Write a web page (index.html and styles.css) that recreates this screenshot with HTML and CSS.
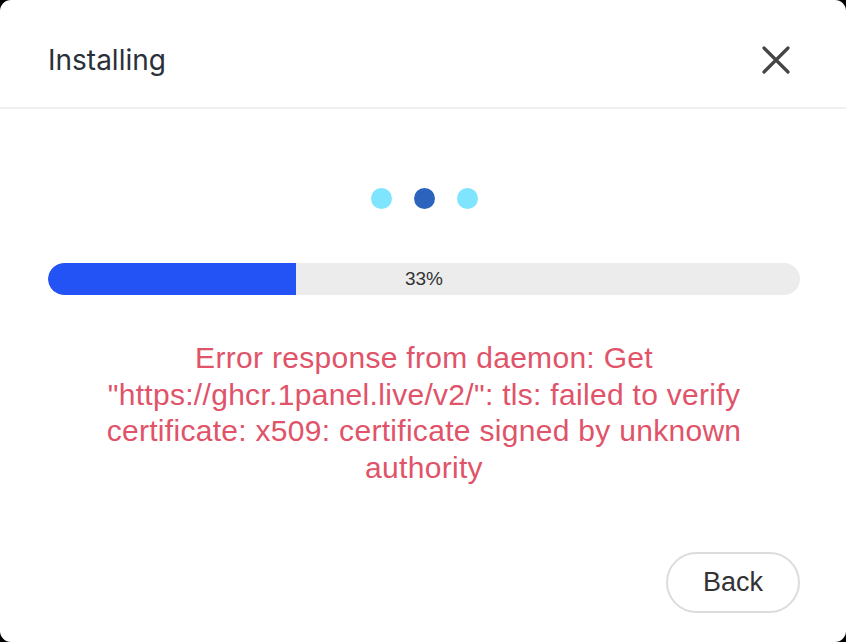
FILE: index.html
```html
<!DOCTYPE html>
<html>
<head>
<meta charset="utf-8">
<link rel="stylesheet" href="styles.css">
</head>
<body>
<div class="dialog">
  <div class="header">
    <div class="title">Installing</div>
    <button class="close" aria-label="Close">
      <svg width="28" height="28" viewBox="0 0 28 28"><path d="M2 2 L26 26 M26 2 L2 26" stroke="#454545" stroke-width="3.2" stroke-linecap="round"/></svg>
    </button>
  </div>
  <div class="body">
    <div class="dots">
      <span class="dot light"></span>
      <span class="dot dark"></span>
      <span class="dot light"></span>
    </div>
    <div class="progress">
      <div class="fill" style="width:33%"></div>
      <div class="label">33%</div>
    </div>
    <div class="error">Error response from daemon: Get "https://ghcr.1panel.live/v2/": tls: failed to verify certificate: x509: certificate signed by unknown authority</div>
  </div>
  <div class="footer">
    <button class="back">Back</button>
  </div>
</div>
</body>
</html>
```
FILE: styles.css
```css
html, body {
  margin: 0;
  padding: 0;
  background: #000;
  width: 846px;
  height: 642px;
  overflow: hidden;
}
.dialog {
  width: 846px;
  height: 642px;
  background: #fff;
  border-radius: 11px;
  display: flex;
  flex-direction: column;
  box-sizing: border-box;
}
.header {
  height: 109px;
  border-bottom: 2px solid #efefef;
  display: flex;
  align-items: center;
  justify-content: space-between;
  padding: 12px 56px 0 48px;
  box-sizing: border-box;
  flex: none;
}
.title {
  font-family: Inter, "Noto Sans", sans-serif;
  font-size: 28px;
  color: #2a3039;
}
.close {
  border: none;
  background: none;
  padding: 0;
  width: 28px;
  height: 28px;
  cursor: pointer;
}
.close svg { display: block; }
.body {
  flex: 1;
  display: flex;
  flex-direction: column;
  align-items: center;
  padding: 79px 46px 0 48px;
}
.dots {
  display: flex;
  gap: 22px;
  height: 21px;
}
.dot {
  width: 21px;
  height: 21px;
  border-radius: 50%;
}
.dot.light { background: #7fe4fd; }
.dot.dark { background: #2b63bd; }
.progress {
  margin-top: 54px;
  width: 752px;
  height: 32px;
  border-radius: 16px;
  background: #ececec;
  position: relative;
  overflow: hidden;
}
.fill {
  height: 100%;
  background: #2453f5;
  border-radius: 16px 0 0 16px;
}
.label {
  position: absolute;
  inset: 0;
  display: flex;
  align-items: center;
  justify-content: center;
  font-family: "Liberation Sans", Arial, sans-serif;
  font-size: 19px;
  color: #333;
}
.error {
  margin-top: 45px;
  width: 690px;
  text-align: center;
  font-family: "Liberation Sans", Arial, sans-serif;
  font-size: 30px;
  letter-spacing: 0.3px;
  line-height: 36.6px;
  color: #e05369;
}
.footer {
  display: flex;
  justify-content: flex-end;
  padding: 0 46px 29px 0;
  flex: none;
}
.back {
  width: 134px;
  height: 61px;
  border: 2px solid #dcdcdc;
  border-radius: 31px;
  background: #fff;
  font-family: "Liberation Sans", Arial, sans-serif;
  font-size: 27px;
  color: #333;
  padding: 0;
}
```
